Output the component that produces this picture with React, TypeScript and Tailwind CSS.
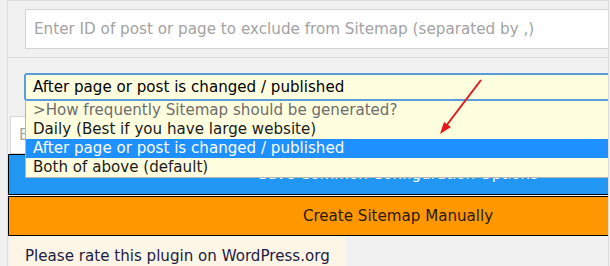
const font = { fontFamily: '"DejaVu Sans", Verdana, sans-serif' };

const options = [
  { label: ">How frequently Sitemap should be generated?", kind: "disabled" },
  { label: "Daily (Best if you have large website)", kind: "normal" },
  { label: "After page or post is changed / published", kind: "active" },
  { label: "Both of above (default)", kind: "normal" },
];

const App = () => {
  return (
    <div
      className="w-[610px] h-[266px] bg-[#f1f1f1] overflow-hidden"
      style={font}
    >
      <div className="ml-[7px] w-[602px] h-[266px] border-x border-t border-[#dcdcdc] overflow-hidden">
        <div className="w-[780px] relative">
          {/* exclude row */}
          <div className="h-[57px] border-b border-[#dcdcdc] pt-[8px] pl-[17px]">
            <div className="h-[40px] bg-white border border-[#d4d4d4] flex items-center pl-[8px] text-[15.2px] text-[#a3a3a3]">
              Enter ID of post or page to exclude from Sitemap (separated by ,)
            </div>
          </div>

          {/* frequency row */}
          <div className="pt-[16px] pl-[17px] h-[96px] relative">
            <div className="h-[26px] bg-[#ffffe0] border border-[#5b9dd9] rounded-[2px] shadow-[0_0_0_1px_#5b9dd9] flex items-center pl-[7px] text-[15.1px] text-black">
              After page or post is changed / published
            </div>
            <div className="absolute left-[2px] top-[58px] w-[400px] h-[38px] bg-white border border-[#d4d4d4] flex items-center pl-[8px] text-[15.1px] text-[#a3a3a3]">
              Enter
            </div>
            {/* open dropdown */}
            <div className="absolute left-[17px] top-[43px] right-0 z-10 bg-[#ffffe0] border-x border-b border-[#b5b5b5] text-[15.1px]">
              {options.map((o) => (
                <div
                  key={o.label}
                  className={
                    o.kind === "active"
                      ? "h-[19px] leading-[19px] pl-[7px] bg-[#1e90ff] text-white"
                      : o.kind === "disabled"
                        ? "h-[19px] leading-[19px] pl-[7px] text-[#6d6d6d]"
                        : "h-[19px] leading-[19px] pl-[7px] text-[#1a1a1a]"
                  }
                >
                  {o.label}
                </div>
              ))}
            </div>
          </div>

          {/* buttons */}
          <div className="flex flex-col gap-[1px]">
            <button className="h-[41px] bg-[#2196f3] border border-black text-white text-[15.1px]">
              Save Common Configuration Options
            </button>
            <button className="h-[40px] bg-[#ff9800] border border-black text-[#2a1a00] text-[15.1px]">
              Create Sitemap Manually
            </button>
          </div>

          <div className="ml-[2px] w-[336px] h-[40px] bg-[#fdf5e6] pl-[15px] pt-[9px] text-[15.1px] text-[#1c2042]">
            Please rate this plugin on WordPress.org
          </div>

          {/* annotation arrow */}
          <svg
            className="absolute left-0 top-0 z-20 pointer-events-none"
            width="610"
            height="266"
          >
            <line x1="473" y1="79" x2="438" y2="125" stroke="#e3171c" strokeWidth="2" />
            <polygon points="432,133 443,126 436,121" fill="#e3171c" />
          </svg>
        </div>
      </div>
    </div>
  );
};

export default App;
